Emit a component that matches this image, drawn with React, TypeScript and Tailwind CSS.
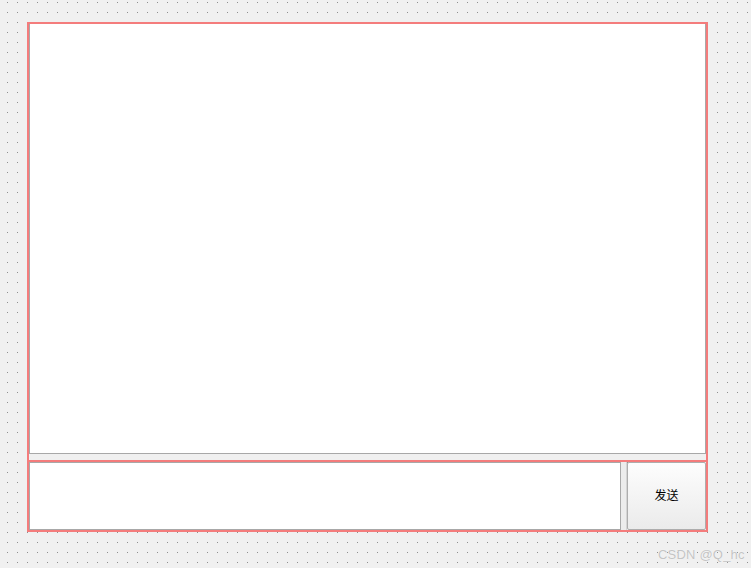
import React from 'react';

const App: React.FC = () => {
    return (
        <div
            className="relative w-[751px] h-[568px] overflow-hidden bg-[#f0f0f0] bg-[radial-gradient(circle_at_0.5px_0.5px,#8e8e8e_0.55px,transparent_0.8px)] bg-[size:10px_10px] bg-[position:7px_2px] pl-[27px] pt-[22px]"
            style={{ fontFamily: '"Liberation Sans", "Noto Sans CJK SC", sans-serif' }}
        >
            {/* vertical layout frame */}
            <div className="w-[681px] h-[510px] flex flex-col border-l-2 border-t-2 border-r-2 border-b-2 border-[#f47c7c]">
                {/* message view */}
                <div className="h-[430px] bg-white border-l border-r border-b border-[#a8a8a8]" />

                <div className="h-[6px] bg-[#f0f0f0]" />

                {/* horizontal layout: input + send */}
                <div className="flex-1 flex border-t-2 border-[#f47c7c]">
                    <div className="flex-1 bg-white border border-[#a8a8a8]" />
                    <div className="w-[6px] bg-[#ececec] border-r border-[#d4d4d4]" />
                    <button className="w-[79px] flex items-center justify-center rounded-[2px] border border-[#adadad] bg-gradient-to-b from-[#fdfdfd] to-[#ebebeb] text-[12px] text-black">
                        发送
                    </button>
                </div>
            </div>

            <div className="absolute left-[658px] top-[545px] text-[13px] text-[#c4c4c4] tracking-[0.2px] whitespace-nowrap [text-shadow:0_0_1px_#ffffff]">
                CSDN @Q_hc
            </div>
        </div>
    );
};

export default App;
